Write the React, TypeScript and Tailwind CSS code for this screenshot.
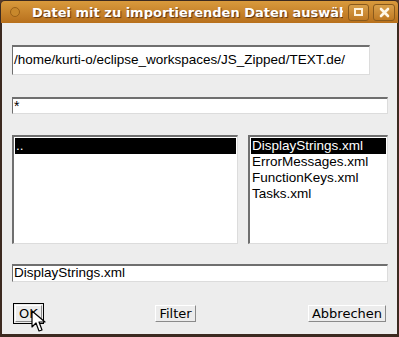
import React from 'react';

const font = { fontFamily: '"DejaVu Sans", "Liberation Sans", sans-serif' };
const wide = { fontFamily: '"Liberation Sans", Arial, sans-serif' };

const ListBox: React.FC<{ items: string[]; selected: number; className?: string }> = ({ items, selected, className }) => (
    <div className={`bg-white border-t-2 border-l-2 border-[#6f6f6f] border-b border-r border-b-[#dcdcdc] border-r-[#dcdcdc] pt-[1px] px-[1px] ${className ?? ''}`}>
        {items.map((item, i) => (
            <div
                key={item}
                style={wide}
                className={`h-4 leading-4 text-[13.5px] pl-[1px] ${i === selected ? 'bg-black text-white' : 'text-black'}`}
            >
                {item}
            </div>
        ))}
    </div>
);

const Field: React.FC<{ value: string; className?: string; textClass?: string }> = ({ value, className, textClass }) => (
    <div className={`bg-white border-t-2 border-l border-[#6f6f6f] border-b border-r border-b-[#dcdcdc] border-r-[#dcdcdc] flex items-center ${className ?? ''}`}>
        <span style={wide} className={`whitespace-nowrap text-black ${textClass ?? 'text-[13.5px]'}`}>{value}</span>
    </div>
);

const Button: React.FC<{ label: string; focused?: boolean; className?: string }> = ({ label, focused, className }) => (
    <div className={focused ? 'border border-black p-[1px]' : ''}>
        <div className={`bg-[#ececec] border border-t-white border-l-white border-b-[#8a8a8a] border-r-[#8a8a8a] h-[17px] flex items-center justify-center text-[13px] text-black ${className ?? ''}`}>
            {label}
        </div>
    </div>
);

export default function App() {
    return (
        <div className="relative w-[399px] h-[337px] bg-[#5a3c2a] overflow-hidden" style={font}>
            <div className="w-[399px] h-[337px] flex flex-col border border-[#3c2a20] rounded-t-[5px] overflow-hidden">
                {/* title bar */}
                <div className="h-[22px] shrink-0 bg-gradient-to-b from-[#d99a3c] to-[#b8701c] flex items-center pl-[9px] pr-[3px]">
                    <div className="w-[10px] h-[10px] rounded-full bg-[#c8882c] border border-[#9a6018] shrink-0" />
                    <div
                        className="ml-[12px] text-white font-bold text-[13px] whitespace-nowrap overflow-hidden w-[311px] leading-none"
                        style={{ textShadow: '1px 1px 1px #5a3210' }}
                    >
                        Datei mit zu importierenden Daten auswählen
                    </div>
                    <div className="ml-auto flex gap-[4px]">
                        <div className="w-[21px] h-[17px] rounded-[3px] border border-[#8a5a1c] bg-gradient-to-b from-[#d9a04a] to-[#c07a22] flex items-center justify-center">
                            <div className="w-[9px] h-[8px] border-2 border-[#fff3dc] bg-[#c98a34]" />
                        </div>
                        <div className="w-[22px] h-[17px] rounded-[3px] border border-[#8a5a1c] bg-gradient-to-b from-[#d9a04a] to-[#c07a22] flex items-center justify-center">
                            <svg width="11" height="11" viewBox="0 0 11 11">
                                <path d="M2 2 L9 9 M9 2 L2 9" stroke="#fff7e8" strokeWidth="2.6" strokeLinecap="round" />
                            </svg>
                        </div>
                    </div>
                </div>
                {/* body */}
                <div className="flex-1 bg-[#ededed] border-x border-[#3c2a20] flex flex-col pl-[10px] pr-[9px]">
                    <Field
                        value="/home/kurti-o/eclipse_workspaces/JS_Zipped/TEXT.de/"
                        className="mt-[22px] h-[30px] w-[358px]"
                        textClass="text-[13.5px] pl-[1px]"
                    />
                    <Field value="*" className="mt-[22px] h-[17px] items-start" textClass="text-[14px] leading-[15px] pl-[1px]" />
                    <div className="mt-[21px] flex gap-[10px] h-[109px]">
                        <ListBox items={['..']} selected={0} className="w-[226px]" />
                        <ListBox
                            items={['DisplayStrings.xml', 'ErrorMessages.xml', 'FunctionKeys.xml', 'Tasks.xml']}
                            selected={0}
                            className="flex-1"
                        />
                    </div>
                    <Field value="DisplayStrings.xml" className="mt-[20px] h-[18px]" textClass="text-[13.5px] pl-[1px]" />
                    <div className="mt-[21px] flex items-center pr-[2px] pl-[1px]">
                        <Button label="OK" focused className="w-[27px]" />
                        <div className="ml-[111px]">
                            <Button label="Filter" className="w-[41px]" />
                        </div>
                        <div className="ml-auto">
                            <Button label="Abbrechen" className="w-[78px]" />
                        </div>
                    </div>
                </div>
                <div className="h-[2px] bg-[#3c2a20] shrink-0" />
            </div>
            {/* mouse cursor */}
            <svg className="absolute left-[31px] top-[310px]" width="16" height="24" viewBox="0 0 16 24">
                <path d="M1 1 L1 17 L5 13 L8 21 L11 20 L8 12 L14 12 Z" fill="white" stroke="black" strokeWidth="1.2" strokeLinejoin="round" />
            </svg>
        </div>
    );
}
